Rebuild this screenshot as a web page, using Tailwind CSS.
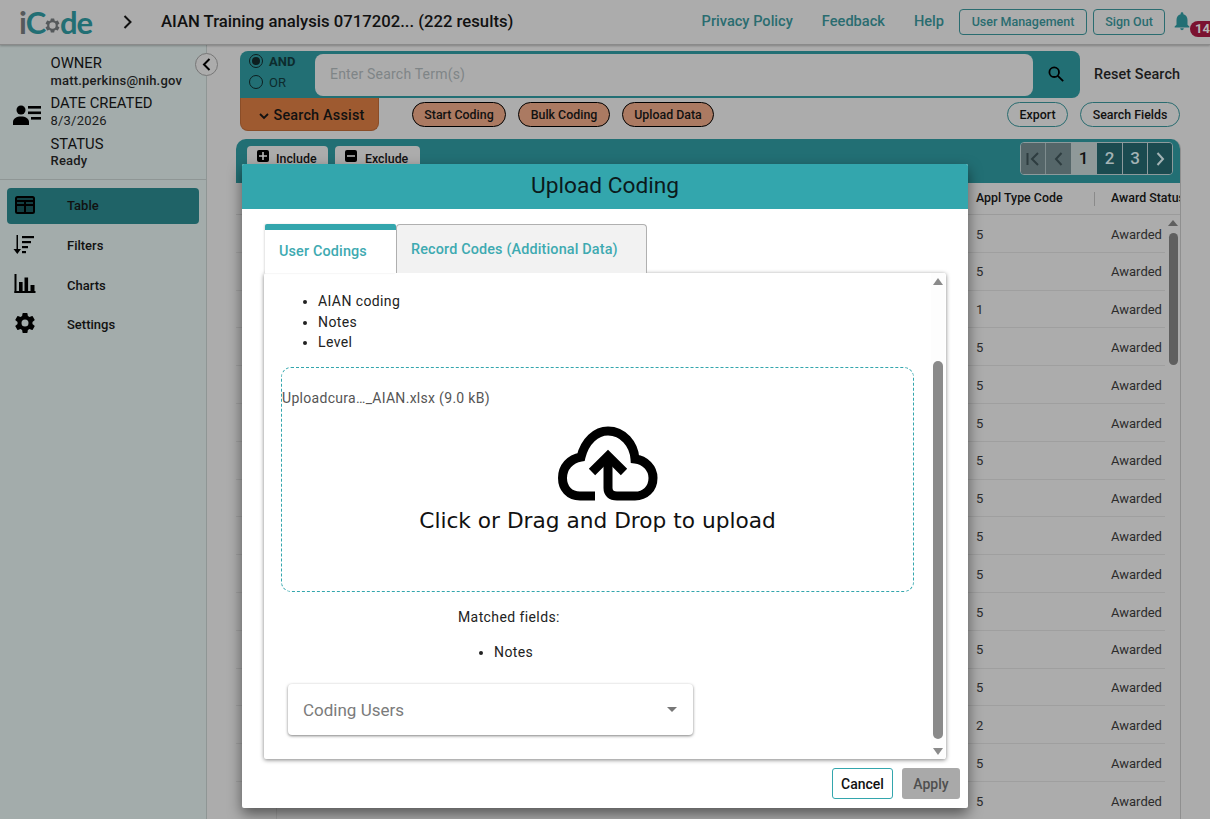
<!DOCTYPE html>
<html lang="en">
<head>
<meta charset="utf-8">
<title>iCode</title>
<script src="https://cdn.jsdelivr.net/npm/@tailwindcss/browser@4"></script>
</head>
<body class="font-['Roboto',sans-serif] bg-[#acacac] text-[#111]">
<div class="relative w-[1210px] h-[819px] overflow-hidden flex flex-col bg-[#acacac]">
  <!-- Header -->
  <header class="relative z-10 h-[45px] shrink-0 flex items-center border-b border-[#8a8a8a] shadow-[0_1px_2px_rgba(0,0,0,0.25)] bg-[#acacac]">
    <div class="w-[123px] pl-[19px] flex items-center font-['Lato',sans-serif] text-[31px] leading-none text-[#226f74] tracking-[-1.2px] font-bold">
      <span class="text-[#55595b]">i</span><span>C</span>
      <svg class="w-[17px] h-[17px] mt-[7px] mx-[-1px] shrink-0" viewBox="0 0 24 24" fill="#55595b"><path fill-rule="evenodd" d="M19.43 12.98c.04-.32.07-.64.07-.98s-.03-.66-.07-.98l2.11-1.65a.5.5 0 0 0 .12-.64l-2-3.46a.5.5 0 0 0-.61-.22l-2.49 1a7.3 7.3 0 0 0-1.69-.98l-.38-2.65A.49.49 0 0 0 14 2h-4a.49.49 0 0 0-.49.42l-.38 2.65c-.61.25-1.17.59-1.69.98l-2.49-1a.5.5 0 0 0-.61.22l-2 3.46a.5.5 0 0 0 .12.64l2.11 1.65c-.04.32-.07.65-.07.98s.03.66.07.98l-2.11 1.65a.5.5 0 0 0-.12.64l2 3.46c.12.22.39.3.61.22l2.49-1c.52.4 1.08.73 1.69.98l.38 2.65c.03.24.24.42.49.42h4c.25 0 .46-.18.49-.42l.38-2.65c.61-.25 1.17-.59 1.69-.98l2.49 1c.22.08.49 0 .61-.22l2-3.46a.5.5 0 0 0-.12-.64zM12 16.5a4.5 4.5 0 1 1 0-9 4.5 4.5 0 0 1 0 9z"/></svg>
      <span>de</span>
    </div>
    <svg class="w-[10px] h-[14px]" viewBox="0 0 10 14" fill="none" stroke="#111" stroke-width="2"><path d="M1.5 1l6 6-6 6"/></svg>
    <h1 class="ml-[28px] text-[16.7px] font-medium leading-none whitespace-nowrap">AIAN Training analysis 0717202... (222 results)</h1>
    <nav class="ml-auto flex items-center text-[14.6px] font-medium text-[#2a6c70]">
      <span>Privacy Policy</span>
      <span class="ml-[29px]">Feedback</span>
      <span class="ml-[29px]">Help</span>
      <span class="ml-[15px] w-[128px] h-[26px] flex items-center justify-center border border-[#2a6c70] rounded-[4px] text-[12.5px]">User Management</span>
      <span class="ml-[6px] w-[72px] h-[26px] flex items-center justify-center border border-[#2a6c70] rounded-[4px] text-[12.5px]">Sign Out</span>
      <div class="relative ml-[8px] w-[37px] h-[30px]">
        <svg class="absolute left-[-2px] top-[3px] w-[22px] h-[22px]" viewBox="0 0 24 24" fill="#226f74"><path d="M12 22a2 2 0 0 0 2-2h-4a2 2 0 0 0 2 2zm6-6v-5c0-3.07-1.64-5.64-4.5-6.32V4a1.5 1.5 0 0 0-3 0v.68C7.63 5.36 6 7.92 6 11v5l-2 2v1h16v-1z"/></svg>
        <span class="absolute left-[17px] top-[14px] w-[30px] h-[16px] rounded-[8px] bg-[#7b1230] pl-[5px] text-[#b5b5b5] text-[13px] font-bold leading-[16px]">14</span>
      </div>
    </nav>
  </header>

  <div class="flex flex-1 min-h-0">
    <!-- Sidebar -->
    <aside class="relative w-[207px] shrink-0 bg-[#a3acab] border-r border-[#8f9695]">
      <div class="h-[135px] flex border-b border-[#8f9695]">
        <div class="w-[51px] flex items-center pl-[13px] pt-[6px]">
          <svg class="w-[28px] h-[20px]" viewBox="0 0 28 20" fill="#000"><circle cx="8" cy="5" r="4.5"/><path d="M0 20v-3c0-3.5 3.5-5.5 8-5.5s8 2 8 5.5v3z"/><rect x="15" y="1" width="13" height="2.6"/><rect x="15" y="6.5" width="13" height="2.6"/><rect x="18" y="12" width="10" height="2.6"/></svg>
        </div>
        <div class="pt-[10px] leading-none -ml-[0.5px]">
          <div class="text-[14.8px] h-[17px] leading-[17px]">OWNER</div>
          <div class="text-[13px] tracking-[0.2px] h-[23px] leading-[17px] font-medium text-[#1b1b1b]">matt.perkins@nih.gov</div>
          <div class="text-[14.8px] h-[17px] leading-[17px]">DATE CREATED</div>
          <div class="text-[13px] tracking-[0.2px] h-[23px] leading-[17px] text-[#1b1b1b]">8/3/2026</div>
          <div class="text-[14.8px] h-[17px] leading-[18px]">STATUS</div>
          <div class="text-[13px] tracking-[0.2px] leading-[17px] font-medium text-[#1b1b1b]">Ready</div>
        </div>
      </div>
      <ul class="pt-[8px] px-[7px] text-[13px] font-medium text-[#111]">
        <li class="h-[36px] w-[192px] flex items-center rounded-[4px] bg-[#1f6367]">
          <svg class="ml-[8px] w-[20px] h-[18px] -mt-[3px]" viewBox="0 0 20 18" fill="none" stroke="#000" stroke-width="2"><rect x="1" y="1" width="18" height="16" rx="1.5" fill="#123f42"/><path d="M1 9h18M10 5v12M1 5h18" stroke-width="2"/></svg>
          <span class="ml-[32px]">Table</span>
        </li>
        <li class="h-[40px] w-[192px] flex items-center pt-[4px]">
          <svg class="ml-[6px] w-[22px] h-[19px] -mt-[4px]" viewBox="0 0 22 19" fill="#000"><path d="M3.5 0h1.5v14h3l-3.7 5L0.5 14h3z"/><rect x="9" y="1" width="12" height="2.2"/><rect x="9" y="6" width="9" height="2.2"/><rect x="9" y="11" width="6" height="2.2"/><rect x="9" y="16" width="4" height="2.2"/></svg>
          <span class="ml-[32px]">Filters</span>
        </li>
        <li class="h-[40px] w-[192px] flex items-center pt-[4px]">
          <svg class="ml-[7px] w-[22px] h-[19px] -mt-[5px]" viewBox="0 0 22 19" fill="#000"><rect x="0.5" y="0" width="2" height="19"/><rect x="0.5" y="17" width="21" height="2"/><rect x="5" y="8" width="3.6" height="10"/><rect x="10.5" y="3.5" width="3.6" height="14"/><rect x="16.5" y="11" width="4" height="7"/></svg>
          <span class="ml-[31px]">Charts</span>
        </li>
        <li class="h-[38px] w-[192px] flex items-center pt-[4px]">
          <svg class="ml-[6px] w-[24px] h-[24px] -mt-[5px]" viewBox="0 0 24 24" fill="#000"><path fill-rule="evenodd" d="M19.43 12.98c.04-.32.07-.64.07-.98s-.03-.66-.07-.98l2.11-1.65a.5.5 0 0 0 .12-.64l-2-3.46a.5.5 0 0 0-.61-.22l-2.49 1a7.3 7.3 0 0 0-1.69-.98l-.38-2.65A.49.49 0 0 0 14 2h-4a.49.49 0 0 0-.49.42l-.38 2.65c-.61.25-1.17.59-1.69.98l-2.49-1a.5.5 0 0 0-.61.22l-2 3.46a.5.5 0 0 0 .12.64l2.11 1.65c-.04.32-.07.65-.07.98s.03.66.07.98l-2.11 1.65a.5.5 0 0 0-.12.64l2 3.46c.12.22.39.3.61.22l2.49-1c.52.4 1.08.73 1.69.98l.38 2.65c.03.24.24.42.49.42h4c.25 0 .46-.18.49-.42l.38-2.65c.61-.25 1.17-.59 1.69-.98l2.49 1c.22.08.49 0 .61-.22l2-3.46a.5.5 0 0 0-.12-.64zM12 15.5a3.5 3.5 0 1 1 0-7 3.5 3.5 0 0 1 0 7z"/></svg>
          <span class="ml-[30px]">Settings</span>
        </li>
      </ul>
      <button class="absolute left-[195px] top-[8px] w-[23px] h-[23px] z-[5] rounded-full border border-[#777] bg-[#acacac] flex items-center justify-center">
        <svg class="w-[9px] h-[13px]" viewBox="0 0 9 13" fill="none" stroke="#000" stroke-width="2"><path d="M7.5 1L2 6.5l5.5 5.5"/></svg>
      </button>
    </aside>

    <!-- Main -->
    <main class="flex-1 min-w-0 pl-[33px] pt-[6px] flex flex-col">
      <div class="flex items-center">
        <div class="w-[840px] h-[47px] rounded-t-[8px] rounded-br-[8px] bg-[#226f74] flex items-center pl-[9px]">
          <div class="w-[66px] text-[13px] leading-none -mt-[6px]">
            <div class="flex items-center h-[21px] font-bold text-[#0d2c2e]">
              <span class="w-[14px] h-[14px] rounded-full border-[1.5px] border-[#0d1f20] flex items-center justify-center"><span class="w-[8px] h-[8px] rounded-full bg-[#0d1f20]"></span></span>
              <span class="ml-[6px]">AND</span>
            </div>
            <div class="flex items-center h-[21px] text-[#0d2c2e]">
              <span class="w-[14px] h-[14px] rounded-full border-[1.5px] border-[#0d1f20]"></span>
              <span class="ml-[6px]">OR</span>
            </div>
          </div>
          <div class="w-[718px] h-[42px] rounded-[8px] bg-[#acacac] flex items-center pl-[15px] text-[14px] tracking-[0.2px] text-[#7f8587]">Enter Search Term(s)</div>
          <svg class="ml-[15px] w-[16px] h-[16px] -mt-[2px]" viewBox="0 0 16 16" fill="none" stroke="#000" stroke-width="1.8"><circle cx="6.2" cy="6.2" r="4.8"/><path d="M9.8 9.8l5.4 5.4"/></svg>
        </div>
        <span class="ml-[14px] text-[14.4px] font-medium tracking-[0.1px] text-[#1b1b1b]">Reset Search</span>
      </div>
      <div class="flex items-start h-[41px] text-[12.4px] font-medium">
        <div class="w-[139px] h-[33px] bg-[#9e5a30] border border-[#8a4d28] border-t-0 rounded-b-[8px] flex items-center justify-center pl-[5px] pt-[4px] text-[14.4px] tracking-[0.2px] text-[#111]">
          <svg class="w-[10px] h-[7px] mr-[4px]" viewBox="0 0 10 7" fill="none" stroke="#111" stroke-width="1.8"><path d="M1 1l4 4 4-4"/></svg>
          Search Assist
        </div>
        <span class="ml-[33px] mt-[4px] w-[94px] h-[25px] pt-[1px] rounded-full bg-[#ab7a62] border border-black flex items-center justify-center">Start Coding</span>
        <span class="ml-[12px] mt-[4px] w-[92px] h-[25px] pt-[1px] rounded-full bg-[#ab7a62] border border-black flex items-center justify-center">Bulk Coding</span>
        <span class="ml-[12px] mt-[4px] w-[92px] h-[25px] pt-[1px] rounded-full bg-[#ab7a62] border border-black flex items-center justify-center">Upload Data</span>
        <span class="ml-[293px] mt-[4px] w-[61px] h-[25px] pt-[1px] rounded-full border border-[#2a6c70] flex items-center justify-center">Export</span>
        <span class="ml-[12px] mt-[4px] w-[100px] h-[25px] pt-[1px] rounded-full border border-[#2a6c70] flex items-center justify-center">Search Fields</span>
      </div>

      <!-- Table card -->
      <section class="relative -ml-[4px] w-[945px] flex-1 min-h-0 overflow-hidden border-r border-[#8f8f8f] rounded-t-[10px] flex flex-col">
        <div class="h-[44px] shrink-0 bg-[#226f74] flex items-start pl-[11px] pr-[7px]">
          <span class="mt-[7px] w-[81px] h-[25px] pt-[1px] rounded-t-[4px] bg-[#acacac] flex items-center pl-[10px] text-[12.4px] font-medium">
            <span class="w-[12px] h-[12px] bg-black rounded-[2px] flex items-center justify-center mb-[7px]"><svg class="w-[8px] h-[8px]" viewBox="0 0 8 8" stroke="#bbb" stroke-width="1.6"><path d="M4 0v8M0 4h8"/></svg></span>
            <span class="ml-[7px]">Include</span>
          </span>
          <span class="mt-[7px] ml-[7px] w-[85px] h-[25px] pt-[1px] rounded-t-[4px] bg-[#acacac] flex items-center pl-[10px] text-[12.4px] font-medium">
            <span class="w-[12px] h-[12px] bg-black rounded-[2px] flex items-center justify-center mb-[7px]"><svg class="w-[8px] h-[8px]" viewBox="0 0 8 8" stroke="#bbb" stroke-width="1.6"><path d="M0 4h8"/></svg></span>
            <span class="ml-[8px]">Exclude</span>
          </span>
          <div class="ml-auto mt-[3px] h-[33px] flex rounded-[4px] border border-[#8d9a9c] overflow-hidden text-[17px] font-medium">
            <span class="w-[25px] bg-[#556669] border-r border-[#7e8c8e] flex items-center justify-center"><svg class="w-[14px] h-[14px]" viewBox="0 0 14 14" fill="none" stroke="#2e3d40" stroke-width="2"><path d="M1.5 1v12M12 1L6 7l6 6"/></svg></span>
            <span class="w-[25px] bg-[#556669] flex items-center justify-center"><svg class="w-[9px] h-[14px]" viewBox="0 0 9 14" fill="none" stroke="#2e3d40" stroke-width="2"><path d="M7.5 1L2 7l5.5 6"/></svg></span>
            <span class="w-[25px] bg-[#8f9999] flex items-center justify-center text-[#111]">1</span>
            <span class="w-[26px] bg-[#1b4b50] border-l border-[#8d9a9c] flex items-center justify-center text-[#a3b3b5]">2</span>
            <span class="w-[25px] bg-[#1b4b50] border-l border-[#8d9a9c] flex items-center justify-center text-[#a3b3b5]">3</span>
            <span class="w-[25px] bg-[#1b4b50] border-l border-[#8d9a9c] flex items-center justify-center"><svg class="w-[9px] h-[14px]" viewBox="0 0 9 14" fill="none" stroke="#a3b3b5" stroke-width="2"><path d="M1.5 1L7 7l-5.5 6"/></svg></span>
          </div>
        </div>
        <div class="relative flex-1 text-[13px] text-[#2b2b2b]">
          <div class="h-[32px] flex items-center border-b border-[#9b9b9b] text-[12.4px] font-medium text-[#111]">
            <div class="w-[41px] h-full border-r border-[#9b9b9b]"></div>
            <div class="w-[699px]"></div>
            <div class="w-[118px]">Appl Type Code</div>
            <div class="w-px h-[14px] bg-[#8a8a8a]"></div>
            <div class="ml-[16px] w-[69px] overflow-hidden whitespace-nowrap">Award Status</div>
          </div>
          <div class="flex flex-col w-[929px]">
            <div class="h-[37.8px] flex items-center border-b border-[#9f9f9f] pt-[2px]"><div class="w-[41px] h-full border-r border-[#9f9f9f]"></div><div class="w-[699px]"></div><div class="w-[135px]">5</div><div>Awarded</div></div>
            <div class="h-[37.8px] flex items-center border-b border-[#9f9f9f] pt-[2px]"><div class="w-[41px] h-full border-r border-[#9f9f9f]"></div><div class="w-[699px]"></div><div class="w-[135px]">5</div><div>Awarded</div></div>
            <div class="h-[37.8px] flex items-center border-b border-[#9f9f9f] pt-[2px]"><div class="w-[41px] h-full border-r border-[#9f9f9f]"></div><div class="w-[699px]"></div><div class="w-[135px]">1</div><div>Awarded</div></div>
            <div class="h-[37.8px] flex items-center border-b border-[#9f9f9f] pt-[2px]"><div class="w-[41px] h-full border-r border-[#9f9f9f]"></div><div class="w-[699px]"></div><div class="w-[135px]">5</div><div>Awarded</div></div>
            <div class="h-[37.8px] flex items-center border-b border-[#9f9f9f] pt-[2px]"><div class="w-[41px] h-full border-r border-[#9f9f9f]"></div><div class="w-[699px]"></div><div class="w-[135px]">5</div><div>Awarded</div></div>
            <div class="h-[37.8px] flex items-center border-b border-[#9f9f9f] pt-[2px]"><div class="w-[41px] h-full border-r border-[#9f9f9f]"></div><div class="w-[699px]"></div><div class="w-[135px]">5</div><div>Awarded</div></div>
            <div class="h-[37.8px] flex items-center border-b border-[#9f9f9f] pt-[2px]"><div class="w-[41px] h-full border-r border-[#9f9f9f]"></div><div class="w-[699px]"></div><div class="w-[135px]">5</div><div>Awarded</div></div>
            <div class="h-[37.8px] flex items-center border-b border-[#9f9f9f] pt-[2px]"><div class="w-[41px] h-full border-r border-[#9f9f9f]"></div><div class="w-[699px]"></div><div class="w-[135px]">5</div><div>Awarded</div></div>
            <div class="h-[37.8px] flex items-center border-b border-[#9f9f9f] pt-[2px]"><div class="w-[41px] h-full border-r border-[#9f9f9f]"></div><div class="w-[699px]"></div><div class="w-[135px]">5</div><div>Awarded</div></div>
            <div class="h-[37.8px] flex items-center border-b border-[#9f9f9f] pt-[2px]"><div class="w-[41px] h-full border-r border-[#9f9f9f]"></div><div class="w-[699px]"></div><div class="w-[135px]">5</div><div>Awarded</div></div>
            <div class="h-[37.8px] flex items-center border-b border-[#9f9f9f] pt-[2px]"><div class="w-[41px] h-full border-r border-[#9f9f9f]"></div><div class="w-[699px]"></div><div class="w-[135px]">5</div><div>Awarded</div></div>
            <div class="h-[37.8px] flex items-center border-b border-[#9f9f9f] pt-[2px]"><div class="w-[41px] h-full border-r border-[#9f9f9f]"></div><div class="w-[699px]"></div><div class="w-[135px]">5</div><div>Awarded</div></div>
            <div class="h-[37.8px] flex items-center border-b border-[#9f9f9f] pt-[2px]"><div class="w-[41px] h-full border-r border-[#9f9f9f]"></div><div class="w-[699px]"></div><div class="w-[135px]">5</div><div>Awarded</div></div>
            <div class="h-[37.8px] flex items-center border-b border-[#9f9f9f] pt-[2px]"><div class="w-[41px] h-full border-r border-[#9f9f9f]"></div><div class="w-[699px]"></div><div class="w-[135px]">2</div><div>Awarded</div></div>
            <div class="h-[37.8px] flex items-center border-b border-[#9f9f9f] pt-[2px]"><div class="w-[41px] h-full border-r border-[#9f9f9f]"></div><div class="w-[699px]"></div><div class="w-[135px]">5</div><div>Awarded</div></div>
            <div class="h-[37.8px] flex items-center border-b border-[#9f9f9f] pt-[2px]"><div class="w-[41px] h-full border-r border-[#9f9f9f]"></div><div class="w-[699px]"></div><div class="w-[135px]">5</div><div>Awarded</div></div>
          </div>
          <!-- table scrollbar -->
          <div class="absolute left-[932px] top-[37px] w-[10px] flex flex-col items-center">
            <span class="w-0 h-0 border-x-[5px] border-x-transparent border-b-[6px] border-b-[#5f5f5f]"></span>
            <span class="mt-[7px] w-[9px] h-[132px] rounded-full bg-[#5f5f5f]"></span>
          </div>
        </div>
      </section>
    </main>
  </div>

  <!-- Dialog -->
  <div class="absolute left-[242px] top-[164px] w-[726px] h-[644px] z-20 bg-white rounded-[2px] shadow-[0_6px_14px_rgba(0,0,0,0.5)] flex flex-col">
    <div class="h-[45px] shrink-0 bg-[#33a6ad] rounded-t-[2px] flex items-center justify-center text-[22.7px] leading-none text-[#0b1a1c]">Upload Coding</div>
    <div class="pl-[22px] pr-[22px] pt-[15px]">
      <div class="flex h-[49px] text-[14.4px] font-medium text-[#3eaab1] tracking-[0.15px]">
        <div class="ml-[1px] w-[131px] h-[49px] bg-white border-t-[6px] border-[#33a6ad] rounded-t-[2px] shadow-[-1px_0_2px_rgba(0,0,0,0.12)] pl-[14px] pt-[11px] relative z-10">User Codings</div>
        <div class="w-[251px] h-[49px] bg-[#f2f2f2] border border-[#b0b0b0] rounded-t-[4px] pl-[14px] pt-[14px] border-b-0">Record Codes (Additional Data)</div>
      </div>
      <div class="w-[682px] h-[486px] flex bg-white rounded-[2px] shadow-[0_1px_4px_rgba(0,0,0,0.5)]">
        <div class="w-[667px] pl-[17px] text-[14px] tracking-[0.4px] text-[#222]">
          <ul class="list-disc pl-[37px] pt-[18px] leading-[20.5px]">
            <li>AIAN coding</li>
            <li>Notes</li>
            <li>Level</li>
          </ul>
          <div class="mt-[14px] w-[633px] h-[225px] rounded-[10px] border border-dashed border-[#33a6ad] relative flex flex-col items-center">
            <div class="self-start mt-[22px] h-[17px] text-[#555] tracking-[0.3px] leading-[17px]">Uploadcura…_AIAN.xlsx (9.0 kB)</div>
            <svg class="mt-[19px] ml-[21px] w-[100px] h-[76px]" viewBox="0 0 100 76" fill="none" stroke="#000" stroke-width="9"><path d="M37 70H22C11 70 4.500 62 4.500 52C4.500 41 12 33 23 31C27 15 38 5 50 5C65 5 76 18 77 33C87 34 95 42 95 52C95 63 87 70 77 70H59C53 70 50 67 50 62V30"/><path d="M34 46L50 30L66 46"/></svg>
            <div class="mt-[4px] font-['DejaVu_Sans',sans-serif] text-[21.7px] tracking-normal leading-[30px] text-[#111]">Click or Drag and Drop to upload</div>
          </div>
          <div class="ml-[177px] mt-[16px] leading-[18px]">Matched fields:</div>
          <ul class="list-disc ml-[177px] pl-[36px] mt-[17px] leading-[18px]"><li>Notes</li></ul>
          <div class="mt-[23px] ml-[7px] w-[405px] h-[51px] rounded-[4px] bg-white shadow-[0_1px_3px_rgba(0,0,0,0.5)] flex items-center pl-[15px] pr-[16px] text-[17px] tracking-normal text-[#7b7b7b]">
            <span class="pt-[3px]">Coding Users</span>
            <span class="ml-auto w-0 h-0 border-x-[5px] border-x-transparent border-t-[5px] border-t-[#777]"></span>
          </div>
        </div>
        <div class="w-[14px] pt-[5px] pb-[4px] flex flex-col items-center bg-[#fdfdfd]">
          <span class="w-0 h-0 border-x-[5px] border-x-transparent border-b-[7px] border-b-[#8a8a8a]"></span>
          <span class="mt-[76px] w-[10px] h-[378px] rounded-full bg-[#8a8a8a]"></span>
          <span class="mt-auto w-0 h-0 border-x-[5px] border-x-transparent border-t-[7px] border-t-[#8a8a8a]"></span>
        </div>
      </div>
    </div>
    <div class="flex justify-end pr-[8px] mt-[9px] text-[14px] font-medium">
      <button class="w-[61px] h-[31px] pt-[1px] rounded-[3px] border border-[#33a6ad] text-[#111]">Cancel</button>
      <button class="ml-[9px] w-[58px] h-[31px] pt-[1px] rounded-[3px] bg-[#a9a9a9] text-[#4f4f4f]">Apply</button>
    </div>
  </div>
</div>
</body>
</html>
